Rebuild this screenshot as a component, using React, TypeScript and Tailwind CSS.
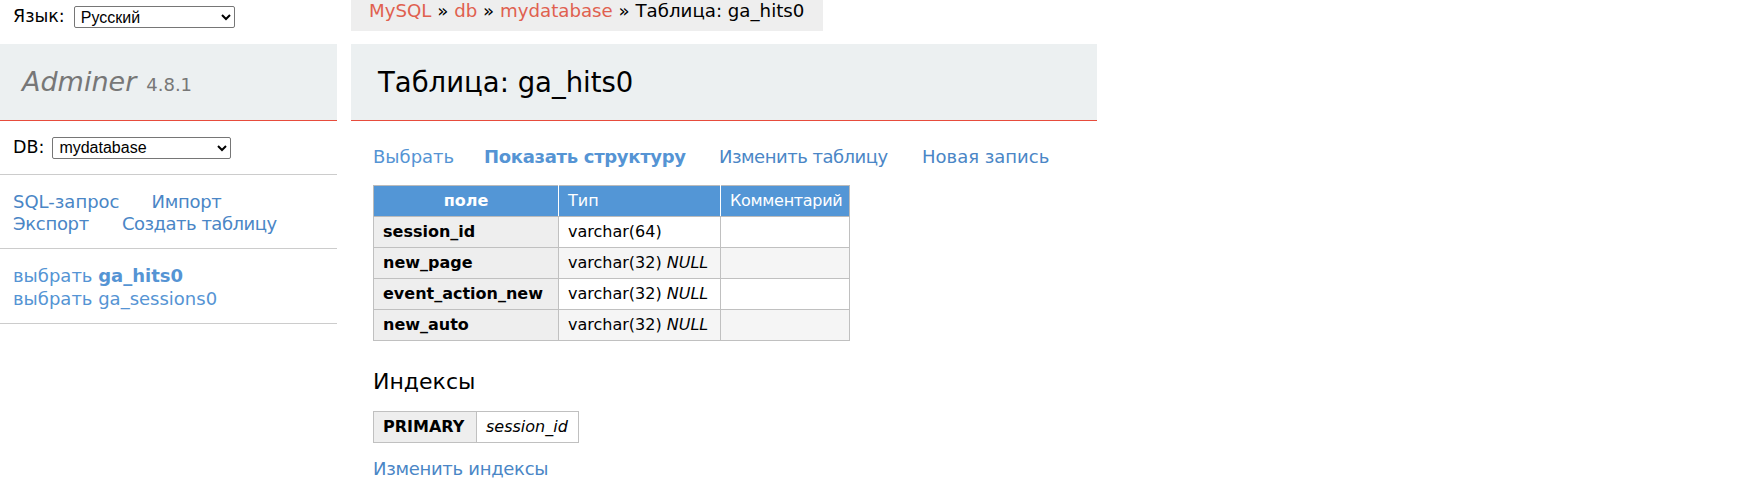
import React from "react";

const link = "text-[#4a86c6]";

function Sel({ value, w }: { value: string; w: string }) {
  return (
    <select
      defaultValue={value}
      className={`${w} h-[22px] border border-[#767676] rounded-[2px] bg-white text-black text-[16px] leading-[20px] font-['Liberation_Sans',sans-serif] pl-[2px]`}
    >
      <option>{value}</option>
    </select>
  );
}

const fields = [
  { name: "session_id", type: "varchar(64)", nul: false },
  { name: "new_page", type: "varchar(32)", nul: true },
  { name: "event_action_new", type: "varchar(32)", nul: true },
  { name: "new_auto", type: "varchar(32)", nul: true },
];

const cell = "border border-[#c0c0c0] px-[9px] py-[5px]";

export default function App() {
  return (
    <div className="flex items-start w-[1752px] h-[482px] bg-white text-black font-['DejaVu_Sans',sans-serif] text-[18px] leading-[1.25] overflow-hidden">
      {/* Sidebar */}
      <aside className="w-[337px] shrink-0">
        <div className="h-[44px] pl-[13px] pt-[6px]">
          <div className="flex items-center gap-[9px] h-[22px]">
            <span className="text-[17.5px]">Язык:</span>
            <Sel value="Русский" w="w-[161px]" />
          </div>
        </div>
        <div className="h-[77px] bg-[#ecf0f1] border-b border-[#e74c3c] flex items-center pl-[22px] gap-[10px]">
          <span className="italic text-[27px] text-[#777]">Adminer</span>
          <span className="text-[18px] text-[#777] mt-[6px]">4.8.1</span>
        </div>
        <div className="h-[54px] flex items-center pl-[13px] gap-[8px] border-b border-[#ccc]">
          <span className="text-[17.5px]">DB:</span>
          <Sel value="mydatabase" w="w-[179px]" />
        </div>
        <div className="pl-[13px] pt-[16px] pb-[13px] leading-[22px] border-b border-[#ccc]">
          <div className="flex gap-[32px]">
            <a className={link}>SQL-запрос</a>
            <a className={`${link} tracking-[-0.3px]`}>Импорт</a>
          </div>
          <div className="flex gap-[33px]">
            <a className={`${link} tracking-[-0.3px]`}>Экспорт</a>
            <a className={`${link} tracking-[-0.5px]`}>Создать таблицу</a>
          </div>
        </div>
        <div className="pl-[13px] pt-[15px] pb-[13px] leading-[23px] border-b border-[#ccc] text-[#5594d4]">
          <div>
            выбрать <b>ga_hits0</b>
          </div>
          <div>выбрать ga_sessions0</div>
        </div>
      </aside>

      {/* Main */}
      <main className="ml-[14px] w-[746px] shrink-0">
        <div className="inline-block h-[31px] bg-[#eeeeee] pl-[18px] pr-[19px] align-top text-[18.2px]">
          <a className="text-[#e0604f]">MySQL</a> » <a className="text-[#e0604f]">db</a> »{" "}
          <a className="text-[#e0604f]">mydatabase</a> » Таблица: ga_hits0
        </div>
        <div className="mt-[13px] h-[77px] bg-[#ecf0f1] border-b border-[#e74c3c] flex items-center pl-[27px]">
          <h1 className="text-[27.5px] font-normal">Таблица: ga_hits0</h1>
        </div>

        <div className="pl-[22px]">
          <div className="mt-[25px] flex">
            <div className="w-[111px]">
              <a className="text-[#5594d4]">Выбрать</a>
            </div>
            <div className="w-[235px]">
              <a className="text-[#5594d4] font-bold tracking-[-0.3px]">Показать структуру</a>
            </div>
            <div className="w-[203px]">
              <a className={`${link} tracking-[-0.5px]`}>Изменить таблицу</a>
            </div>
            <div>
              <a className={link}>Новая запись</a>
            </div>
          </div>

          <table className="mt-[16px] border-collapse table-fixed w-[476px] text-[16px] leading-[20px]">
            <colgroup>
              <col className="w-[185px]" />
              <col className="w-[162px]" />
              <col className="w-[129px]" />
            </colgroup>
            <thead>
              <tr className="bg-[#5396d6] text-white">
                <th className="border border-[#bbb] border-r-white px-[9px] py-[5px] text-center font-bold">поле</th>
                <td className="border border-[#bbb] border-r-white px-[9px] py-[5px]">Тип</td>
                <td className="border border-[#bbb] px-[9px] py-[5px] whitespace-nowrap tracking-[-0.3px]">Комментарий</td>
              </tr>
            </thead>
            <tbody>
              {fields.map((f, i) => (
                <tr key={f.name} className={i % 2 === 1 ? "bg-[#f5f5f5]" : "bg-white"}>
                  <th className={`${cell} bg-[#eeeeee] text-left font-bold whitespace-nowrap`}>{f.name}</th>
                  <td className={`${cell} whitespace-nowrap`}>
                    {f.type}
                    {f.nul && <i> NULL</i>}
                  </td>
                  <td className={cell}></td>
                </tr>
              ))}
            </tbody>
          </table>

          <h3 className="mt-[27px] text-[22px] leading-[1.25] font-normal">Индексы</h3>

          <table className="mt-[16px] border-collapse table-fixed w-[205px] text-[16px] leading-[20px]">
            <colgroup>
              <col className="w-[103px]" />
              <col className="w-[102px]" />
            </colgroup>
            <tbody>
              <tr>
                <th className={`${cell} bg-[#eeeeee] text-left font-bold`}>PRIMARY</th>
                <td className={`${cell} italic`}>session_id</td>
              </tr>
            </tbody>
          </table>

          <div className="mt-[15px]">
            <a className={`${link} tracking-[-0.3px]`}>Изменить индексы</a>
          </div>
        </div>
      </main>
    </div>
  );
}
